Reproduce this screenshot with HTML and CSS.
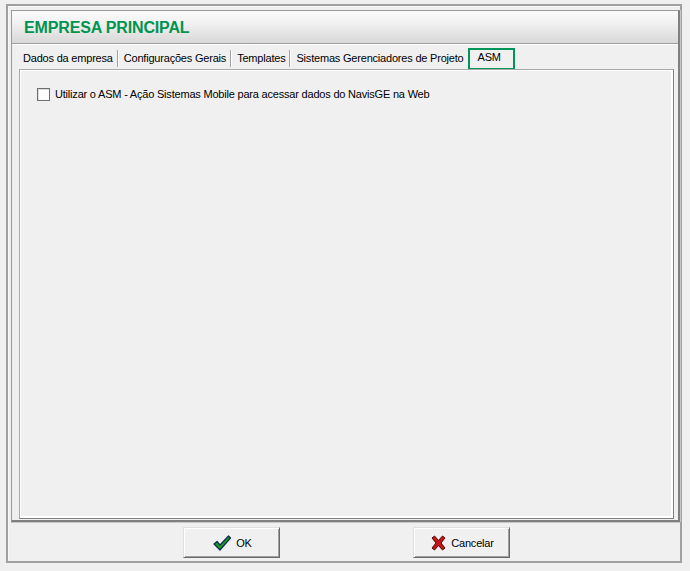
FILE: index.html
```html
<!DOCTYPE html>
<html lang="pt">
<head>
<meta charset="utf-8">
<title>Empresa Principal</title>
<link rel="stylesheet" href="styles.css">
</head>
<body>
<div class="window">
  <div class="panel">
    <div class="header"><h1 class="title">EMPRESA PRINCIPAL</h1></div>
    <div class="tabs">
      <span class="tab">Dados da empresa</span><span class="sep"></span>
      <span class="tab">Configurações Gerais</span><span class="sep"></span>
      <span class="tab">Templates</span><span class="sep"></span>
      <span class="tab">Sistemas Gerenciadores de Projeto</span>
      <span class="tab active">ASM</span>
    </div>
    <div class="content">
      <label class="check-row"><span class="checkbox"></span><span class="check-label">Utilizar o ASM - Ação Sistemas Mobile para acessar dados do NavisGE na Web</span></label>
    </div>
  </div>
  <div class="footer">
    <button class="btn">
      <svg class="icon" width="18" height="16" viewBox="0 0 18 16"><path d="M1 9 L4 6.5 L7 10 L15.5 1 L17.5 3 L7 15 Z" fill="#1f9a1f" stroke="#0a2a5a" stroke-width="1.2" stroke-linejoin="round"/></svg>
      <span>OK</span>
    </button>
    <button class="btn">
      <svg class="icon" width="15" height="16" viewBox="0 0 15 16"><path d="M1 3 L3.5 1 L7.5 5.5 L11.5 1 L14 3 L10 8 L14 13 L11.5 15 L7.5 10.5 L3.5 15 L1 13 L5 8 Z" fill="#c81414" stroke="#4a0a0a" stroke-width="1" stroke-linejoin="round"/></svg>
      <span>Cancelar</span>
    </button>
  </div>
</div>
</body>
</html>
```

FILE: styles.css
```css
html, body {
  margin: 0;
  padding: 0;
}
body {
  width: 690px;
  height: 571px;
  background: #f0f0f0;
  font-family: "Liberation Sans", Arial, sans-serif;
  font-size: 11px;
  letter-spacing: -0.2px;
  color: #000;
  overflow: hidden;
}
.window {
  margin: 4px 0 0 6px;
  width: 672px;
  height: 555px;
  border: 2px solid #a0a0a0;
  box-shadow: inset 1px 1px #f8f8f8;
  display: flex;
  flex-direction: column;
}
.panel {
  margin: 4px 0 0 3px;
  width: 666px;
  height: 509px;
  border: 1px solid #9a9a9a;
  border-right: 2px solid #808080;
  border-bottom: 2px solid #808080;
  box-shadow: 0 1px 0 #c8c8c8, 1px 0 0 #c8c8c8;
  display: flex;
  flex-direction: column;
  background: #f0f0f0;
}
.header {
  height: 32px;
  border-bottom: 1px solid #a0a0a0;
  background: linear-gradient(#fbfbfb, #f0f0f0 40%, #d8d8d8);
  display: flex;
  align-items: center;
  padding-left: 12px;
}
.title {
  margin: 2px 0 0 0;
  font-size: 16px;
  font-weight: bold;
  color: #009450;
  letter-spacing: -0.15px;
}
.tabs {
  height: 25px;
  display: flex;
  align-items: flex-start;
  padding: 4px 0 0 10px;
  box-sizing: border-box;
  border-top: 1px solid #ffffff;
}
.tab {
  padding: 3px 2px 0 1px;
  white-space: nowrap;
}
.sep {
  width: 1px;
  height: 17px;
  margin: 1px 4px 0 2px;
  background: #a0a0a0;
  border-right: 1px solid #ffffff;
}
.tab.active {
  margin: -1px 0 0 2px;
  height: 17px;
  padding: 1px 0 0 8px;
  border: 2px solid #00965a;
  box-sizing: content-box;
  width: 35px;
}
.content {
  margin: 0 4px 1px 7px;
  flex: 1;
  border: 1px solid #a8a8a8;
  border-right-color: #808080;
  border-bottom-color: #808080;
  box-shadow: inset 1px 1px #ffffff, inset -2px -2px #ffffff;
  padding: 18px 0 0 17px;
}
.check-row {
  display: flex;
  align-items: center;
  gap: 5px;
}
.checkbox {
  width: 11px;
  height: 11px;
  border: 1px solid #6e6e6e;
  background: #ffffff;
  box-shadow: inset 1px 1px #dcdcdc;
}
.check-label {
  line-height: 13px;
}
.footer {
  flex: 1;
  display: flex;
  justify-content: center;
  align-items: flex-start;
  gap: 133px;
  padding-top: 5px;
  padding-left: 5px;
}
.btn {
  width: 97px;
  height: 31px;
  background: #f0f0f0;
  border: 1px solid;
  border-color: #e0e0e0 #696969 #696969 #e0e0e0;
  box-shadow: inset 1px 1px #ffffff, inset -1px -1px #a0a0a0;
  font-family: "Liberation Sans", Arial, sans-serif;
  font-size: 11px;
  letter-spacing: -0.2px;
  color: #000;
  display: flex;
  align-items: center;
  justify-content: center;
  gap: 5px;
  padding: 0 0 0 2px;
}
.icon {
  display: block;
}
```
